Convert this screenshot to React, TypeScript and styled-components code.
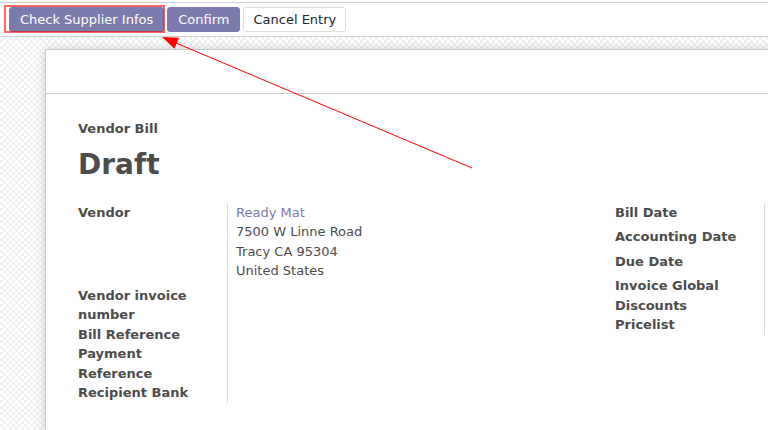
import React from "react";
import styled, { createGlobalStyle } from "styled-components";

const Global = createGlobalStyle`
  html, body { margin: 0; padding: 0; }
  body {
    width: 768px;
    height: 430px;
    overflow: hidden;
    background: #ffffff;
    font-family: "DejaVu Sans", Verdana, sans-serif;
    font-size: 13px;
    line-height: 1.5;
    color: #4c4c4c;
  }
  * { box-sizing: border-box; }
`;

const Page = styled.div`
  position: relative;
  width: 768px;
  height: 430px;
  overflow: hidden;
  display: flex;
  flex-direction: column;
`;

const TopStrip = styled.div`
  height: 2px;
  background: #ffffff;
  flex: none;
`;

const ControlPanel = styled.div`
  flex: none;
  height: 35px;
  border-top: 1px solid #cfcfcf;
  border-bottom: 1px solid #cfcfcf;
  background: #ffffff;
  display: flex;
  align-items: flex-start;
  gap: 3px;
  padding: 4px 0 0 9px;
`;

const Button = styled.button<{ $primary?: boolean }>`
  height: 25px;
  padding: 0 ${(p) => (p.$primary ? "10px" : "9px")};
  border-radius: 3px;
  font-family: inherit;
  font-size: 13px;
  line-height: 23px;
  cursor: pointer;
  border: 1px solid ${(p) => (p.$primary ? "#7c7bad" : "#dcdcdc")};
  background: ${(p) => (p.$primary ? "#7c7bad" : "#ffffff")};
  color: ${(p) => (p.$primary ? "#ffffff" : "#212529")};
`;

const FormArea = styled.div`
  flex: 1;
  min-height: 0;
  padding: 12px 0 0 45px;
  background-color: #ffffff;
  background-image: repeating-conic-gradient(#f1f1f1 0% 25%, #ffffff 0% 50%);
  background-size: 6px 6px;
  overflow: hidden;
`;

const Sheet = styled.div`
  width: 1185px;
  min-height: 600px;
  background: #ffffff;
  border: 1px solid #cccccc;
  box-shadow: 0 0 10px rgba(0, 0, 0, 0.18);
`;

const SheetHeader = styled.div`
  height: 44px;
  border-bottom: 1px solid #d0d0d0;
`;

const SheetBody = styled.div`
  padding: 25px 32px 0 32px;
`;

const DocType = styled.div`
  font-weight: bold;
  font-size: 13px;
  line-height: 19.5px;
  color: #4c4c4c;
`;

const Title = styled.h1`
  margin: 9px 0 0 0;
  font-size: 28px;
  line-height: 34px;
  font-weight: bold;
  color: #4c4c4c;
`;

const Groups = styled.div`
  margin-top: 21px;
  display: flex;
`;

const Group = styled.div`
  width: 537px;
  display: flex;
  flex-direction: column;
`;

const Row = styled.div<{ $h?: number }>`
  display: grid;
  grid-template-columns: 150px 1fr;
  min-height: ${(p) => (p.$h ? `${p.$h}px` : "auto")};
`;

const Label = styled.div`
  font-weight: bold;
  color: #4c4c4c;
  padding-right: 16px;
  border-right: 1px solid #dcdcdc;
  line-height: 19.5px;
`;

const Value = styled.div<{ $pb?: number }>`
  padding-left: 8px;
  padding-bottom: ${(p) => (p.$pb ? `${p.$pb}px` : "0")};
  line-height: 19.5px;
  color: #4c4c4c;
`;

const Link = styled.div`
  color: #7c7bad;
`;

const Overlay = styled.svg`
  position: absolute;
  left: 0;
  top: 0;
  pointer-events: none;
`;

export default function App() {
  return (
    <>
      <Global />
      <Page>
        <TopStrip />
        <ControlPanel>
          <Button $primary>Check Supplier Infos</Button>
          <Button $primary>Confirm</Button>
          <Button>Cancel Entry</Button>
        </ControlPanel>
        <FormArea>
          <Sheet>
            <SheetHeader />
            <SheetBody>
              <DocType>Vendor Bill</DocType>
              <Title>Draft</Title>
              <Groups>
                <Group>
                  <Row>
                    <Label>Vendor</Label>
                    <Value $pb={5}>
                      <Link>Ready Mat</Link>
                      <div>7500 W Linne Road</div>
                      <div>Tracy CA 95304</div>
                      <div>United States</div>
                    </Value>
                  </Row>
                  <Row>
                    <Label>Vendor invoice number</Label>
                    <Value />
                  </Row>
                  <Row>
                    <Label>Bill Reference</Label>
                    <Value />
                  </Row>
                  <Row>
                    <Label>Payment Reference</Label>
                    <Value />
                  </Row>
                  <Row>
                    <Label>Recipient Bank</Label>
                    <Value />
                  </Row>
                </Group>
                <Group>
                  <Row $h={24.5}>
                    <Label>Bill Date</Label>
                    <Value />
                  </Row>
                  <Row $h={24.5}>
                    <Label>Accounting Date</Label>
                    <Value />
                  </Row>
                  <Row $h={24.5}>
                    <Label>Due Date</Label>
                    <Value />
                  </Row>
                  <Row>
                    <Label>Invoice Global Discounts</Label>
                    <Value />
                  </Row>
                  <Row>
                    <Label>Pricelist</Label>
                    <Value />
                  </Row>
                </Group>
              </Groups>
            </SheetBody>
          </Sheet>
        </FormArea>
        <Overlay width="768" height="430" viewBox="0 0 768 430">
          <rect x="5" y="6" width="159" height="26" fill="none" stroke="#ff0000" strokeOpacity="0.6" strokeWidth="2" />
          <line x1="472" y1="168" x2="176" y2="43" stroke="#ff0000" strokeWidth="1" />
          <polygon points="162,37 174.4,48.7 179,37.7" fill="#ff0000" />
        </Overlay>
      </Page>
    </>
  );
}
